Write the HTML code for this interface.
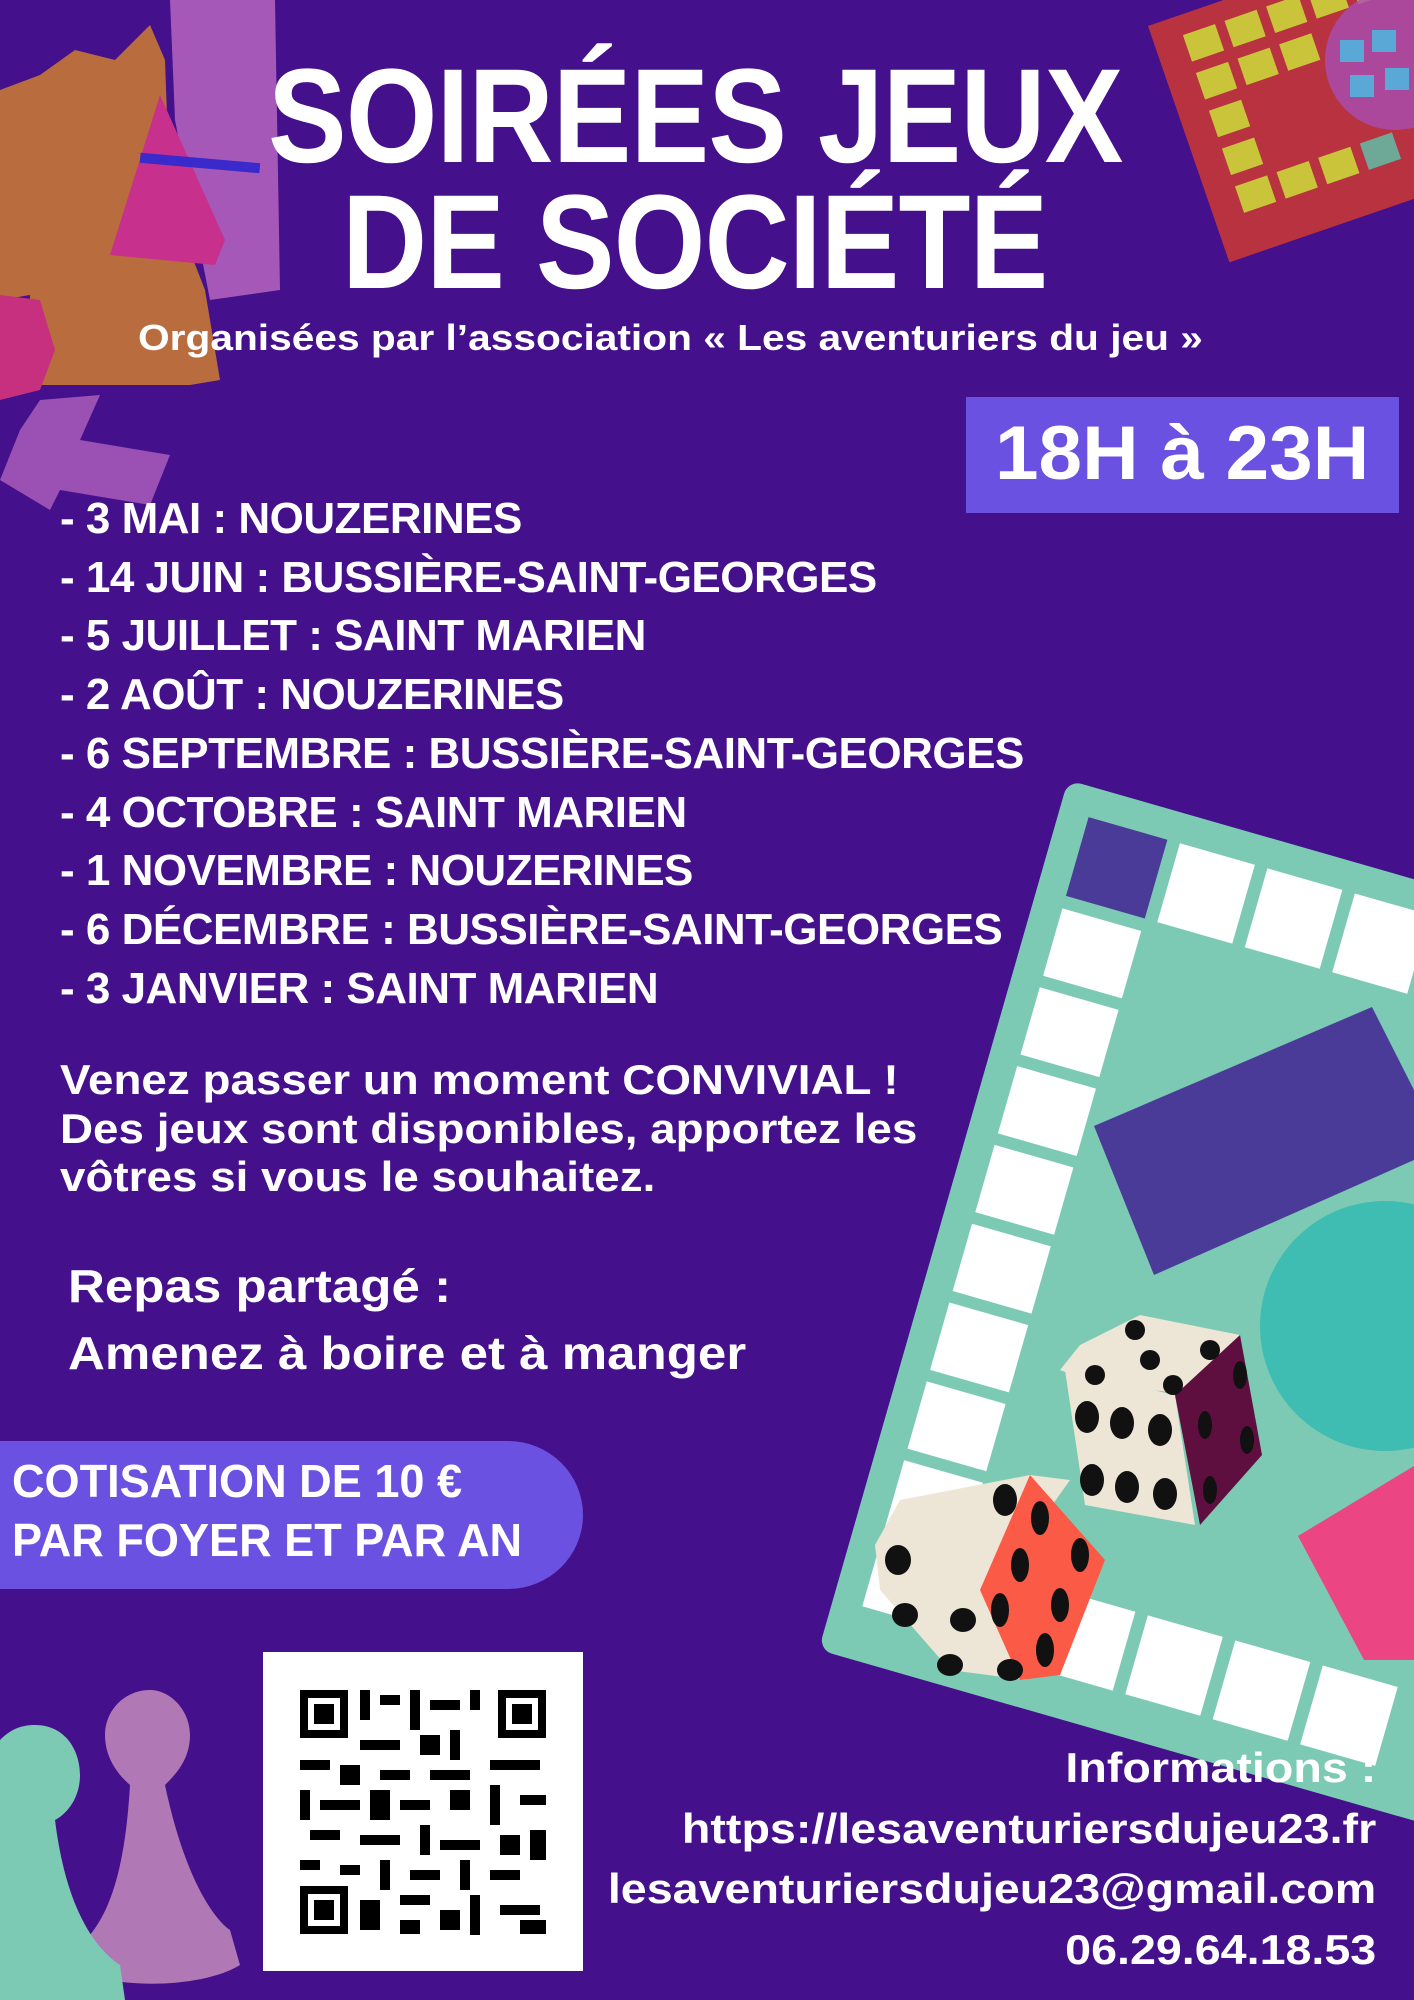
<!DOCTYPE html>
<html><head><meta charset="utf-8"><style>
*{margin:0;padding:0;box-sizing:border-box}
body{width:1414px;height:2000px;background:#44108b;position:relative;overflow:hidden;font-family:"Liberation Sans",sans-serif;color:#fff;font-weight:bold}
svg.bg{position:absolute;left:0;top:0}
.t{position:absolute;white-space:nowrap;transform-origin:0 0}
.title{font-size:134px;line-height:1;letter-spacing:-1px}
.list{position:absolute;left:60px;top:490px;font-size:44px;line-height:58.7px;transform:scaleX(1.0);transform-origin:0 0;white-space:nowrap;letter-spacing:-0.5px}
</style></head><body>
<svg class="bg" width="1414" height="2000" viewBox="0 0 1414 2000">
<polygon points="170,0 275,0 280,290 210,300 175,120" fill="#a558b8"/>
<polygon points="0,90 40,75 75,50 115,60 150,25 165,60 170,200 205,290 220,380 190,385 30,385 30,295 0,300" fill="#b96d3e"/>
<polygon points="160,95 225,240 215,265 110,255" fill="#c7308c"/>
<rect x="140" y="158" width="120" height="10" fill="#3a2acb" transform="rotate(5 200 163)"/>
<polygon points="0,295 40,300 55,350 40,390 0,400" fill="#c6307f"/>
<polygon points="40,400 100,395 80,440 170,455 150,505 60,490 50,510 0,480 20,430" fill="#a558b8" opacity="0.9"/>
<g transform="translate(1148,26) rotate(-19)">
<rect x="0" y="0" width="340" height="250" fill="#b8333f"/>
<g fill="#c9c43a">
<rect x="30" y="20" width="34" height="28"/><rect x="74" y="20" width="34" height="28"/><rect x="118" y="20" width="34" height="28"/><rect x="162" y="20" width="34" height="28"/><rect x="206" y="20" width="34" height="28"/>
<rect x="30" y="60" width="34" height="28"/><rect x="30" y="100" width="34" height="28"/><rect x="30" y="140" width="34" height="28"/><rect x="30" y="180" width="34" height="28"/>
<rect x="74" y="180" width="34" height="28"/><rect x="118" y="180" width="34" height="28"/>
<rect x="74" y="60" width="34" height="28"/><rect x="118" y="60" width="34" height="28"/>
</g>
<rect x="162" y="180" width="34" height="28" fill="#6ea896"/>
</g>
<circle cx="1395" cy="60" r="70" fill="#a74db4" opacity="0.8"/>
<g fill="#5aa8d6"><rect x="1340" y="40" width="24" height="22"/><rect x="1372" y="30" width="24" height="22"/><rect x="1350" y="75" width="24" height="22"/><rect x="1385" y="68" width="24" height="22"/></g>
<g transform="translate(1068,780) rotate(16)">
<rect x="0" y="0" width="1000" height="905" rx="14" fill="#7ccab4"/>
<rect x="30" y="30" width="82" height="82" fill="#4b3b98"/>
<g fill="#fff">
<rect x="125" y="30" width="78" height="82"/><rect x="216" y="30" width="78" height="82"/><rect x="307" y="30" width="78" height="82"/><rect x="398" y="30" width="78" height="82"/>
<rect x="30" y="125" width="82" height="70"/><rect x="30" y="207" width="82" height="70"/><rect x="30" y="289" width="82" height="70"/><rect x="30" y="371" width="82" height="70"/><rect x="30" y="453" width="82" height="70"/><rect x="30" y="535" width="82" height="70"/><rect x="30" y="617" width="82" height="70"/><rect x="30" y="699" width="82" height="70"/><rect x="30" y="781" width="82" height="70"/>
<rect x="125" y="781" width="78" height="82"/><rect x="216" y="781" width="78" height="82"/><rect x="307" y="781" width="78" height="82"/><rect x="398" y="781" width="78" height="82"/><rect x="489" y="781" width="78" height="82"/>
</g>
</g>
<polygon points="1094,1126 1372,1007 1414,1090 1414,1160 1154,1275" fill="#4b3b98"/>
<circle cx="1385" cy="1326" r="125" fill="#3fbdb3"/>
<polygon points="1298,1536 1414,1466 1414,1660 1364,1660" fill="#ec4583"/>
<polygon points="1080,1345 1140,1315 1240,1335 1200,1395 1100,1385 1060,1370" fill="#ede5d6"/>
<polygon points="1065,1370 1175,1395 1195,1525 1085,1505" fill="#ede5d6"/>
<polygon points="1175,1395 1240,1335 1262,1455 1200,1525" fill="#5f0f3f"/>
<g fill="#111">
<circle cx="1135" cy="1330" r="10"/><circle cx="1210" cy="1350" r="10"/><circle cx="1095" cy="1375" r="10"/><circle cx="1150" cy="1360" r="10"/><circle cx="1173" cy="1385" r="10"/>
<ellipse cx="1087" cy="1417" rx="12" ry="16"/><ellipse cx="1122" cy="1423" rx="12" ry="16"/><ellipse cx="1160" cy="1430" rx="12" ry="16"/>
<ellipse cx="1092" cy="1480" rx="12" ry="16"/><ellipse cx="1127" cy="1487" rx="12" ry="16"/><ellipse cx="1165" cy="1494" rx="12" ry="16"/>
<ellipse cx="1240" cy="1375" rx="7" ry="14"/><ellipse cx="1247" cy="1440" rx="7" ry="14"/><ellipse cx="1205" cy="1425" rx="7" ry="14"/><ellipse cx="1210" cy="1490" rx="7" ry="14"/>
</g>
<polygon points="900,1500 1030,1475 1070,1480 985,1600 1025,1680 950,1670 880,1590 875,1545" fill="#ede5d6"/>
<polygon points="1030,1475 1105,1560 1060,1675 1020,1680 980,1590" fill="#fa5a46"/>
<g fill="#111">
<ellipse cx="1005" cy="1500" rx="12" ry="16"/><ellipse cx="898" cy="1560" rx="13" ry="15"/><ellipse cx="905" cy="1615" rx="13" ry="12"/><ellipse cx="963" cy="1620" rx="13" ry="12"/>
<ellipse cx="950" cy="1665" rx="13" ry="11"/><ellipse cx="1010" cy="1670" rx="13" ry="11"/>
<ellipse cx="1040" cy="1518" rx="9" ry="17"/><ellipse cx="1080" cy="1555" rx="9" ry="17"/><ellipse cx="1020" cy="1565" rx="9" ry="17"/><ellipse cx="1060" cy="1605" rx="9" ry="17"/><ellipse cx="1000" cy="1610" rx="9" ry="17"/><ellipse cx="1045" cy="1650" rx="9" ry="17"/>
</g>
<path d="M150,1690 C170,1690 190,1710 190,1735 C190,1760 175,1775 165,1785 C185,1880 215,1920 230,1930 L240,1965 C200,1990 100,1990 75,1965 L90,1935 C110,1910 125,1870 130,1785 C115,1772 105,1755 105,1735 C105,1710 125,1690 150,1690Z" fill="#b078b4"/>
<path d="M35,1725 C65,1725 80,1750 80,1775 C80,1800 65,1815 55,1820 C65,1900 90,1945 120,1965 L125,2000 L0,2000 L0,1740 C10,1730 20,1725 35,1725Z" fill="#7ccab4"/>
<path d="M0,1441 H508 A75,74 0 0 1 508,1589 H0Z" fill="#6b51e2"/>
<rect x="966" y="397" width="433" height="116" fill="#6b51e2"/>
<rect x="263" y="1652" width="320" height="319" fill="#fff"/>
<g fill="#000">
<rect x="300" y="1690" width="48" height="48"/><rect x="308" y="1698" width="32" height="32" fill="#fff"/><rect x="314" y="1704" width="20" height="20"/>
<rect x="498" y="1690" width="48" height="48"/><rect x="506" y="1698" width="32" height="32" fill="#fff"/><rect x="512" y="1704" width="20" height="20"/>
<rect x="300" y="1886" width="48" height="48"/><rect x="308" y="1894" width="32" height="32" fill="#fff"/><rect x="314" y="1900" width="20" height="20"/>
<rect x="360" y="1690" width="10" height="30"/><rect x="380" y="1695" width="20" height="10"/><rect x="410" y="1690" width="10" height="40"/><rect x="430" y="1700" width="30" height="10"/><rect x="470" y="1690" width="10" height="20"/>
<rect x="360" y="1740" width="40" height="10"/><rect x="420" y="1735" width="20" height="20"/><rect x="450" y="1730" width="10" height="30"/>
<rect x="300" y="1760" width="30" height="10"/><rect x="340" y="1765" width="20" height="20"/><rect x="380" y="1770" width="30" height="10"/><rect x="430" y="1770" width="40" height="10"/><rect x="490" y="1760" width="50" height="10"/>
<rect x="300" y="1790" width="10" height="30"/><rect x="320" y="1800" width="40" height="10"/><rect x="370" y="1790" width="20" height="30"/><rect x="400" y="1800" width="30" height="10"/><rect x="450" y="1790" width="20" height="20"/><rect x="490" y="1785" width="10" height="40"/><rect x="520" y="1795" width="26" height="10"/>
<rect x="310" y="1830" width="30" height="10"/><rect x="360" y="1835" width="40" height="10"/><rect x="420" y="1825" width="10" height="30"/><rect x="440" y="1840" width="40" height="10"/><rect x="500" y="1835" width="20" height="20"/><rect x="530" y="1830" width="16" height="30"/>
<rect x="300" y="1860" width="20" height="10"/><rect x="340" y="1865" width="20" height="10"/><rect x="380" y="1860" width="10" height="30"/><rect x="410" y="1870" width="30" height="10"/><rect x="460" y="1860" width="10" height="30"/><rect x="490" y="1870" width="30" height="10"/>
<rect x="360" y="1900" width="20" height="30"/><rect x="400" y="1895" width="30" height="10"/><rect x="440" y="1910" width="20" height="20"/><rect x="470" y="1895" width="10" height="40"/><rect x="500" y="1905" width="40" height="10"/><rect x="520" y="1920" width="26" height="14"/><rect x="400" y="1920" width="20" height="14"/>
</g>
</svg>

<div class="t title" style="left:268px;top:50px;transform:scaleX(0.88)">SOIRÉES JEUX</div>
<div class="t title" style="left:342px;top:176px;transform:scaleX(0.88)">DE SOCIÉTÉ</div>
<div class="t" style="left:138px;top:317px;font-size:36px;transform:scaleX(1.13)">Organisées par l’association « Les aventuriers du jeu »</div>
<div class="t" style="left:995px;top:410px;font-size:76px;transform:scaleX(1.03)">18H à 23H</div>

<div class="list">- 3 MAI : NOUZERINES<br>- 14 JUIN : BUSSIÈRE-SAINT-GEORGES<br>- 5 JUILLET : SAINT MARIEN<br>- 2 AOÛT : NOUZERINES<br>- 6 SEPTEMBRE : BUSSIÈRE-SAINT-GEORGES<br>- 4 OCTOBRE : SAINT MARIEN<br>- 1 NOVEMBRE : NOUZERINES<br>- 6 DÉCEMBRE : BUSSIÈRE-SAINT-GEORGES<br>- 3 JANVIER : SAINT MARIEN</div>

<div class="t" style="left:60px;top:1056px;font-size:42px;line-height:48.5px;transform:scaleX(1.09)">Venez passer un moment CONVIVIAL !<br>Des jeux sont disponibles, apportez les<br>vôtres si vous le souhaitez.</div>
<div class="t" style="left:68px;top:1253px;font-size:46px;line-height:67px;transform:scaleX(1.11)">Repas partagé :<br>Amenez à boire et à manger</div>
<div class="t" style="left:12px;top:1452px;font-size:46px;line-height:59px;transform:scaleX(0.98)">COTISATION DE 10 €<br>PAR FOYER ET PAR AN</div>

<div class="t" style="right:38px;top:1738px;font-size:42px;line-height:60.5px;text-align:right;transform-origin:100% 0;transform:scaleX(1.11)">Informations :<br>https://lesaventuriersdujeu23.fr<br>lesaventuriersdujeu23@gmail.com<br>06.29.64.18.53</div>
</body></html>
